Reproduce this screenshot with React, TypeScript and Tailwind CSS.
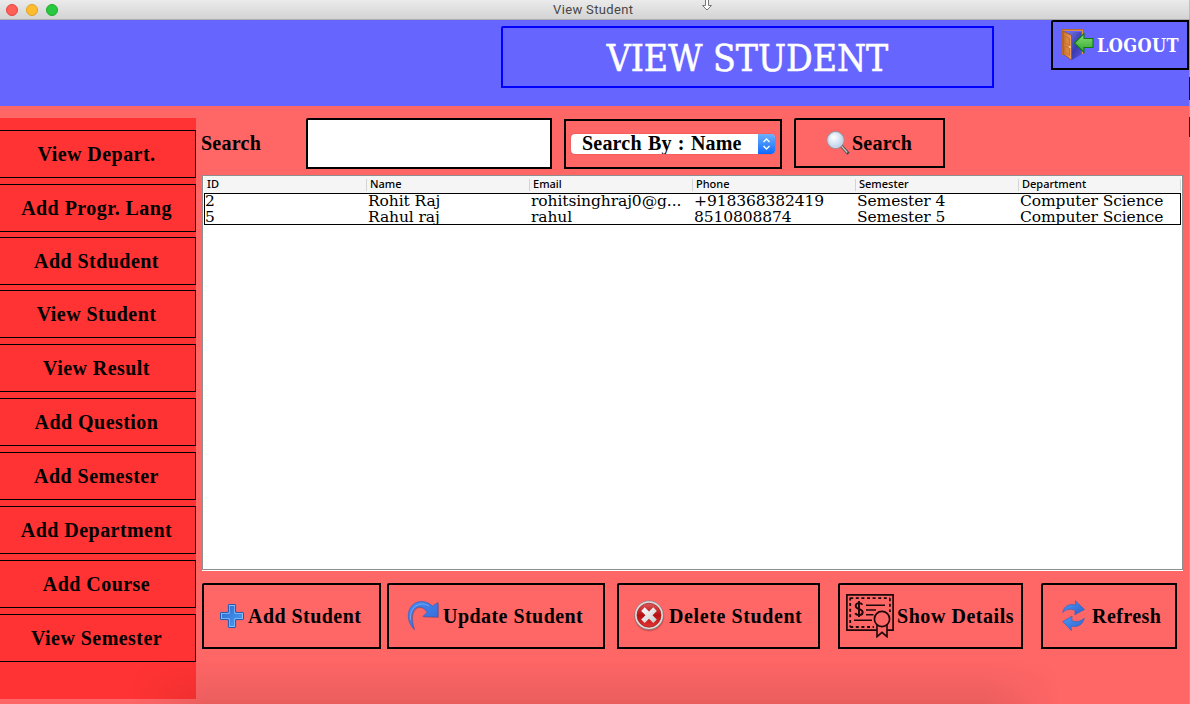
import React from "react";

const navItems = [
  { label: "View Depart.", gap: "mt-[12px]" },
  { label: "Add Progr. Lang", gap: "mt-[6px]" },
  { label: "Add Stdudent", gap: "mt-[5px]" },
  { label: "View Student", gap: "mt-[5px]" },
  { label: "View Result", gap: "mt-[6px]" },
  { label: "Add Question", gap: "mt-[6px]" },
  { label: "Add Semester", gap: "mt-[6px]" },
  { label: "Add Department", gap: "mt-[6px]" },
  { label: "Add Course", gap: "mt-[6px]" },
  { label: "View Semester", gap: "mt-[6px]" },
];

const columns = ["ID", "Name", "Email", "Phone", "Semester", "Department"];

const rows = [
  ["2", "Rohit Raj", "rohitsinghraj0@g...", "+918368382419", "Semester 4", "Computer Science"],
  ["5", "Rahul raj", "rahul", "8510808874", "Semester 5", "Computer Science"],
];

function DoorIcon() {
  return (
    <svg width="34" height="34" viewBox="0 0 34 34" className="block shrink-0">
      <defs>
        <linearGradient id="door" x1="0" y1="0" x2="1" y2="0">
          <stop offset="0" stopColor="#c87030" />
          <stop offset="1" stopColor="#f0a05a" />
        </linearGradient>
        <linearGradient id="dark" x1="0" y1="0" x2="1" y2="1">
          <stop offset="0" stopColor="#7c7cf0" />
          <stop offset="0.6" stopColor="#3b3bb0" />
          <stop offset="1" stopColor="#5858e0" />
        </linearGradient>
        <linearGradient id="exit" x1="0" y1="0" x2="0" y2="1">
          <stop offset="0" stopColor="#8be07a" />
          <stop offset="1" stopColor="#2fa52a" />
        </linearGradient>
      </defs>
      <path d="M4 4h17v22l-10 6z" fill="url(#dark)" />
      <path d="M1.500 27V2h20v24" fill="none" stroke="#b5652a" strokeWidth="2.200" />
      <path d="M2 27V2.400h19.500V26" fill="none" stroke="#e9964a" strokeWidth="0.900" />
      <path d="M2 3l8.500 4.500V32l-8.500-6z" fill="url(#door)" stroke="#8f4a16" strokeWidth="0.700" />
      <path d="M4 8l4.500 2.500v7L4 15zM4 18l4.500 2.500v7L4 24z" fill="#d98642" stroke="#b5652a" strokeWidth="0.600" />
      <circle cx="9" cy="19" r="0.900" fill="#f8d49a" />
      <path d="M13.500 15L23 5.500v5h9v9h-9v5z" fill="url(#exit)" stroke="#0c7a14" strokeWidth="1.100" />
    </svg>
  );
}

function SearchIcon() {
  return (
    <svg width="24" height="24" viewBox="0 0 24 24" className="block shrink-0">
      <defs>
        <radialGradient id="lens" cx="0.4" cy="0.35" r="0.7">
          <stop offset="0" stopColor="#ffffff" />
          <stop offset="1" stopColor="#b4cdea" />
        </radialGradient>
      </defs>
      <path d="M15 14.500l7.500 8.300" stroke="#4a4a4a" strokeWidth="3.200" />
      <path d="M15 14.500l6.200 7" stroke="#c4c4c4" strokeWidth="1.400" />
      <circle cx="9.500" cy="9" r="8.200" fill="url(#lens)" stroke="#8a95a5" strokeWidth="1.600" />
      <circle cx="9.500" cy="9" r="7.700" fill="none" stroke="#dfe4ea" strokeWidth="0.800" />
    </svg>
  );
}

function PlusIcon() {
  return (
    <svg width="24" height="24" viewBox="0 0 24 24" className="block shrink-0">
      <defs>
        <linearGradient id="plus" x1="0" y1="0" x2="1" y2="1">
          <stop offset="0" stopColor="#2b68cc" />
          <stop offset="1" stopColor="#4aa0f8" />
        </linearGradient>
      </defs>
      <path d="M9 .5h6q.6 0 .6.6v7.300h7.300q.6 0 .6.6v6q0 .6-.6.6h-7.300v7.300q0 .6-.6.6H9q-.6 0-.6-.6v-7.300H1.100q-.6 0-.6-.6V9q0-.6.6-.6h7.300V1.100Q8.400.5 9 .5z" fill="#84bff8" stroke="#1d57b5" strokeWidth="1" />
      <path d="M9.700 2h4.600v7.700H22v4.600h-7.700V22H9.700v-7.700H2V9.700h7.700z" fill="url(#plus)" />
    </svg>
  );
}

function UpdateIcon() {
  return (
    <svg width="34" height="34" viewBox="0 0 34 34" className="block shrink-0">
      <defs>
        <linearGradient id="update" x1="0" y1="0" x2="1" y2="1">
          <stop offset="0" stopColor="#4c8df0" />
          <stop offset="1" stopColor="#2f66d8" />
        </linearGradient>
      </defs>
      <path d="M7.300 30.500C1 24.500-.2 15.500 3 9.500 7.500.8 18.500.5 25.500 7L31 3.500v14.500L15.800 17.500l4.500-4.300C15.300 5.600 8 7 5.800 13.500c-1.700 5.500-.3 11.500 1.500 17z" fill="#772f3c" opacity="0.3" transform="translate(1 1)" />
      <path d="M7.300 30.500C1 24.500-.2 15.500 3 9.500 7.500.8 18.500.5 25.500 7L31 3.500v14.500L15.800 17.500l4.500-4.300C15.300 5.600 8 7 5.800 13.500c-1.700 5.500-.3 11.500 1.500 17z" fill="url(#update)" stroke="#285cba" strokeWidth="0.600" />
      <path d="M3.600 21C2.200 8.800 12 1.200 22 7" fill="none" stroke="#84bafa" strokeWidth="0.900" opacity="0.700" />
    </svg>
  );
}

function DeleteIcon() {
  return (
    <svg width="32" height="32" viewBox="0 0 32 32" className="block shrink-0">
      <defs>
        <linearGradient id="del" x1="0" y1="0" x2="0" y2="1">
          <stop offset="0" stopColor="#dd5a5a" />
          <stop offset="0.5" stopColor="#b80f12" />
          <stop offset="1" stopColor="#e33434" />
        </linearGradient>
        <linearGradient id="cross" x1="0" y1="0" x2="1" y2="1">
          <stop offset="0" stopColor="#ffffff" />
          <stop offset="1" stopColor="#c9c9c9" />
        </linearGradient>
      </defs>
      <circle cx="16.300" cy="16.500" r="15" fill="#803030" opacity="0.35" />
      <circle cx="16" cy="15.200" r="14.600" fill="#8f8787" />
      <circle cx="16" cy="15.200" r="13.900" fill="#e0dcdc" />
      <circle cx="16" cy="15.200" r="12" fill="url(#del)" stroke="#9b2020" strokeWidth="0.700" />
      <path d="M8.200 10.900L11.700 7.300 16 11.600l4.300-4.300L23.800 10.900l-4.300 4.300 4.300 4.300-3.500 3.600-4.300-4.300-4.300 4.300L8.200 19.500l4.300-4.300z" fill="url(#cross)" />
    </svg>
  );
}

function CertificateIcon() {
  return (
    <svg width="48" height="44" viewBox="0 0 48 44" fill="none" stroke="#1c0808" className="block shrink-0">
      <path d="M31 36.200H.9V.9h46.200v35.300H41" strokeWidth="1.700" />
      <path d="M4.200 3.500V33M4.200 33H28M4.200 4.200H44M43.900 4.200V18" strokeWidth="1.800" strokeDasharray="3 2.600" />
      <path d="M16.300 10.800c-.8-2.400-6.600-2.500-6.600 1.200 0 3.900 7 2.300 7 6.200 0 3.700-6.500 3.700-7.300.8M13 7v16" strokeWidth="1.900" />
      <path d="M20 11.300h19M20 16h10M20 20.700h7.500M8 26.300h18" strokeWidth="1.600" />
      <circle cx="36" cy="25" r="7.600" strokeWidth="1.700" />
      <path d="M31 31v11.700l5-4.300 5 4.300V31" strokeWidth="1.600" />
    </svg>
  );
}

function RefreshIcon() {
  return (
    <svg width="24" height="32" viewBox="0 0 24 32" className="block shrink-0">
      <defs>
        <linearGradient id="refresh" x1="0" y1="0" x2="1" y2="1">
          <stop offset="0" stopColor="#4f98f4" />
          <stop offset="1" stopColor="#2b60cf" />
        </linearGradient>
      </defs>
      <path d="M.7 12.500C2 5.500 8 3.300 13.800 5L13.300.8 22.500 9.500l-9.700 5.300.3-4.300C8.500 8.300 4 9.300.7 12.500z" fill="url(#refresh)" stroke="#2b62bd" strokeWidth="0.600" />
      <path d="M22.300 18C21 25.300 15 27.700 9 26l.5 4.700L.7 21.500l9.300-5.300v4.500c4.700 1.700 9 .7 12.300-2.700z" fill="url(#refresh)" stroke="#2b62bd" strokeWidth="0.600" />
    </svg>
  );
}

type ActionProps = { label: string; icon: React.ReactNode; box: string; text: string };

function ActionButton({ label, icon, box, text }: ActionProps) {
  return (
    <button className={`flex h-[66px] shrink-0 items-center rounded-tl-[2px] border-2 border-black ${box}`}>
      {icon}
      <span className={text}>{label}</span>
    </button>
  );
}

export default function App() {
  return (
    <div className="relative flex h-[704px] w-[1190px] flex-col overflow-hidden bg-[#ff6666] font-['Liberation_Serif',serif] text-[20px] leading-6 font-bold tracking-[0.45px] whitespace-nowrap text-black [word-spacing:1px]">
      <header className="relative flex h-[20px] shrink-0 items-center border-b border-[#acacac] bg-linear-to-b from-[#ebebeb] to-[#d3d3d3] pl-[6px]">
        <div className="flex w-[547px] gap-[8px]">
          <span className="size-[12px] rounded-full border border-[#e0443e] bg-[#ff5f57]" />
          <span className="size-[12px] rounded-full border border-[#dea123] bg-[#ffbd2e]" />
          <span className="size-[12px] rounded-full border border-[#1aab29] bg-[#28c940]" />
        </div>
        <span className="font-[Roboto,sans-serif] text-[13px] leading-[16px] font-normal tracking-[0.35px] text-[#474747] [word-spacing:0]">View Student</span>
        <svg width="12" height="11" viewBox="0 0 12 11" className="absolute top-0 left-[701px]">
          <path d="M4.500-1v6.500H1.500L6 10l4.500-4.500h-3V-1z" fill="#fff" stroke="#777" strokeWidth="1" />
        </svg>
      </header>

      <div className="flex h-[86px] shrink-0 items-start bg-[#6666ff] pl-[501px]">
        <h1 className="mt-[6px] flex h-[62px] w-[493px] items-center justify-center rounded-tl-[2px] border-2 border-[#0000ff] pt-[3px] font-['DejaVu_Serif_Condensed','DejaVu_Serif',serif] text-[37px] leading-[48px] font-normal tracking-normal text-white [-webkit-text-stroke:0.5px_white] [font-stretch:condensed] [word-spacing:0]">
          VIEW STUDENT
        </h1>
        <button className="ml-[57px] flex h-[50px] w-[138px] items-center rounded-tl-[2px] border-2 border-black pl-[8px] text-white">
          <DoorIcon />
          <span className="ml-[2px] pt-px font-['DejaVu_Serif_Condensed','DejaVu_Serif',serif] text-[18px] tracking-[0.4px] [font-stretch:condensed]">LOGOUT</span>
        </button>
      </div>

      <div className="flex min-h-0 flex-1 pt-[12px]">
        <nav className="h-[581px] w-[196px] shrink-0 bg-[#ff3333]">
          {navItems.map((item) => (
            <button key={item.label} className={`flex h-[48px] w-full items-center justify-center border border-l-0 border-black pr-[2px] ${item.gap}`}>
              {item.label}
            </button>
          ))}
        </nav>

        <main className="ml-[6px] flex w-[981px] flex-col">
          <div className="flex h-[51px] items-start">
            <label className="-ml-px mt-[13px] w-[105px] tracking-[0.25px]">Search</label>
            <input className="h-[51px] w-[246px] rounded-tl-[2px] border-2 border-black bg-white" />
            <div className="mt-[1px] ml-[12px] flex h-[50px] w-[218px] items-center border-2 border-black pl-[5px]">
              <div className="flex h-[20px] w-[204px] items-center overflow-hidden rounded-[4px] bg-white shadow-[0_0_1px_rgba(0,0,0,0.5)]">
                <span className="w-[187px] pb-[2px] pl-[11px] tracking-[0.2px]">Search By : Name</span>
                <span className="flex h-full w-[17px] items-center justify-center bg-linear-to-b from-[#6cb0fb] to-[#0a67fe]">
                  <svg width="9" height="12" viewBox="0 0 9 12" fill="none" stroke="#fff" strokeWidth="1.400">
                    <path d="M1.500 4l3-3 3 3M1.500 8l3 3 3-3" />
                  </svg>
                </span>
              </div>
            </div>
            <button className="ml-[12px] flex h-[50px] w-[151px] items-center rounded-tl-[2px] border-2 border-black pl-[30px]">
              <SearchIcon />
              <span className="ml-[2px] tracking-[0.25px]">Search</span>
            </button>
          </div>

          <section className="mt-[6px] h-[396px] border-b border-white">
            <div className="h-[395px] border border-[#8e8e8e] bg-white px-px">
              <div className="grid h-[17px] grid-cols-[163px_163px_163px_163px_163px_162px] items-center bg-[#f5f5f5] font-['Noto_Sans',sans-serif] text-[11px] leading-[12px] font-medium tracking-normal [word-spacing:0]">
                {columns.map((name) => (
                  <div key={name} className="h-[12px] border-r border-[#d4d4d4] pl-[3px] leading-[10px]">
                    {name}
                  </div>
                ))}
              </div>
              <div className="h-[32px] w-[977px] border border-black font-['DejaVu_Serif',serif] text-[15.5px] font-normal tracking-[-0.1px] [word-spacing:0]">
                {rows.map((row) => (
                  <div key={row[0]} className="grid h-[16px] grid-cols-[163px_163px_163px_163px_163px_161px] overflow-hidden leading-[14px]">
                    {row.map((cell, i) => (
                      <div key={i}>{cell}</div>
                    ))}
                  </div>
                ))}
              </div>
            </div>
          </section>

          <div className="mt-[12px] flex h-[66px] items-start">
            <ActionButton label="Add Student" icon={<PlusIcon />} box="w-[179px] pl-[16px]" text="ml-[4px]" />
            <ActionButton label="Update Student" icon={<UpdateIcon />} box="ml-[6px] w-[218px] pl-[18px]" text="ml-[2px]" />
            <ActionButton label="Delete Student" icon={<DeleteIcon />} box="ml-[12px] w-[203px] pl-[14px]" text="ml-[4px] tracking-[0.6px]" />
            <ActionButton label="Show Details" icon={<CertificateIcon />} box="ml-[18px] w-[185px] pl-[6px]" text="ml-[3px] tracking-[0.55px]" />
            <ActionButton label="Refresh" icon={<RefreshIcon />} box="ml-[18px] w-[136px] pl-[19px]" text="ml-[6px]" />
          </div>
        </main>
      </div>

      <div className="pointer-events-none absolute bottom-0 left-[130px] h-[44px] w-[930px] bg-linear-to-b from-transparent to-black/8 [mask-image:linear-gradient(to_right,transparent,black_8%,black_92%,transparent)]" />
      <div className="pointer-events-none absolute top-0 right-0 flex h-full w-px flex-col bg-[#b9a0a8]/60">
        <span className="mt-[77px] h-[23px] w-px bg-[#14143c]" />
        <span className="mt-[17px] h-[20px] w-px bg-[#3c1414]" />
      </div>
    </div>
  );
}
